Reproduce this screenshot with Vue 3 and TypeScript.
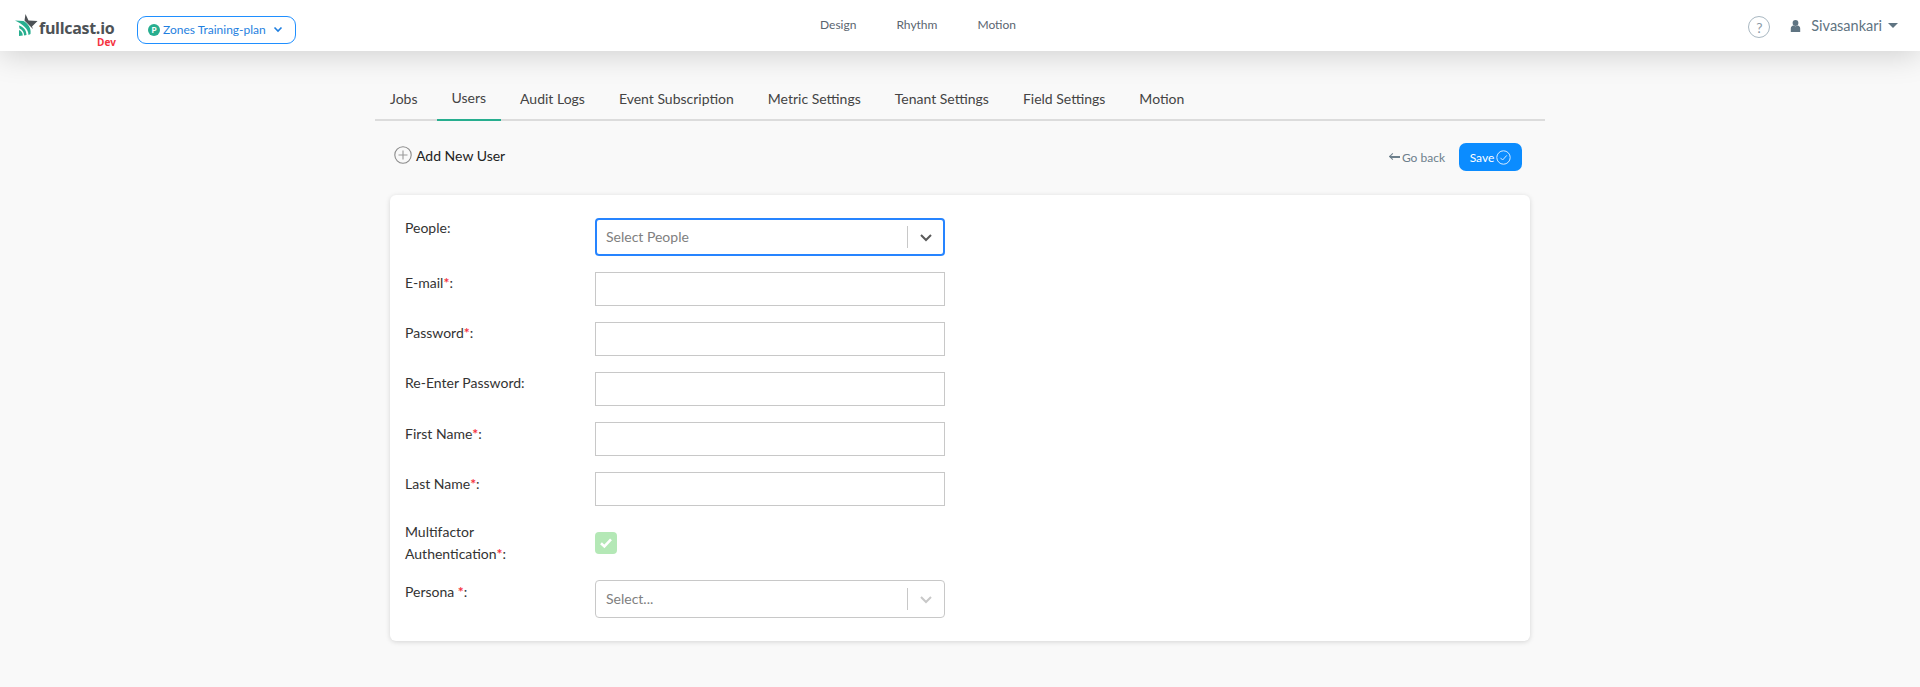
<template>
  <div class="page">
    <header class="topbar">
      <div class="topbar-left">
        <div class="logo">
          <svg class="logo-mark" width="24" height="24" viewBox="0 0 24 24">
            <path d="M10.5 1 13.5 7.5 22.5 8 17 13.5 18 16 9.5 7.5Z" fill="#4d5256" />
            <path d="M0 7.5 8.5 8C13 10.5 16.5 15 15.5 21L13.5 22C13.5 16 8 11.5 0 7.5Z" fill="#27ae8f" />
            <path d="M4 12.5C8 13.5 11.5 17 11.5 22L9.2 22.5C9 19 7 16.3 4.5 15.5Z" fill="#27ae8f" />
            <path d="M4 17C6 17.7 7.8 20 7.8 22.5L4 23Z" fill="#27ae8f" />
          </svg>
          <span class="logo-name">fullcast.io</span>
          <span class="logo-env">Dev</span>
        </div>
        <button class="plan-btn" type="button">
          <span class="plan-dot">P</span>
          <span>Zones Training-plan</span>
          <svg class="plan-chevron" width="10" height="7" viewBox="0 0 10 7">
            <path d="M1.5 1.5 5 5 8.5 1.5" fill="none" stroke="#1f7fe0" stroke-width="1.6" />
          </svg>
        </button>
      </div>
      <nav class="topnav">
        <a v-for="item in topLinks" :key="item">{{ item }}</a>
      </nav>
      <div class="topbar-right">
        <span class="help">?</span>
        <svg class="user-icon" width="11" height="12" viewBox="0 0 11 12">
          <circle cx="5.5" cy="3" r="2.9" fill="#5f7482" />
          <path d="M0.8 12V8.6C0.8 6.8 2 5.8 3.4 5.6 4.6 6.4 6.4 6.4 7.6 5.6 9 5.8 10.2 6.8 10.2 8.6V12Z" fill="#5f7482" />
        </svg>
        <span class="user-name">Sivasankari</span>
        <span class="caret"></span>
      </div>
    </header>

    <main class="content">
      <ul class="tabs">
        <li v-for="tab in tabs" :key="tab" :class="{ active: tab === 'Users' }">{{ tab }}</li>
      </ul>

      <div class="toolbar">
        <div class="add-user">
          <svg width="18" height="18" viewBox="0 0 18 18">
            <circle cx="9" cy="9" r="8.2" fill="none" stroke="#8b8b8b" stroke-width="1.1" />
            <path d="M9 4.5V13.5M4.5 9H13.5" stroke="#9a9a9a" stroke-width="1.1" />
          </svg>
          <span>Add New User</span>
        </div>
        <div class="actions">
          <span class="go-back"><span class="back-arrow"></span>Go back</span>
          <button class="save-btn" type="button">
            Save
            <svg width="15" height="15" viewBox="0 0 15 15">
              <circle cx="7.5" cy="7.5" r="6.7" fill="none" stroke="#d5ebff" stroke-width="1" />
              <path d="M4.4 7.8 6.6 10 10.8 5.4" fill="none" stroke="#d5ebff" stroke-width="1" />
            </svg>
          </button>
        </div>
      </div>

      <form class="card" @submit.prevent>
        <div class="row">
          <label class="raised">People:</label>
          <div class="select focused">
            <span class="placeholder">Select People</span>
            <span class="sep"></span>
            <svg width="14" height="9" viewBox="0 0 14 9">
              <path d="M2 2 7 7 12 2" fill="none" stroke="#5a5a5a" stroke-width="2" />
            </svg>
          </div>
        </div>
        <div v-for="field in textFields" :key="field.label" class="row">
          <label :class="{ lowered: field.lowered }">{{ field.label }}<i v-if="field.required">*</i>:</label>
          <input class="input" :type="field.type" />
        </div>
        <div class="row mfa">
          <label>Multifactor Authentication<i>*</i>:</label>
          <span class="check">
            <svg width="14" height="12" viewBox="0 0 14 12">
              <path d="M2 6.2 5.4 9.4 12 2.4" fill="none" stroke="#fff" stroke-width="2.6" />
            </svg>
          </span>
        </div>
        <div class="row">
          <label class="lowered">Persona <i>*</i>:</label>
          <div class="select">
            <span class="placeholder">Select...</span>
            <span class="sep"></span>
            <svg width="14" height="9" viewBox="0 0 14 9">
              <path d="M2 2 7 7 12 2" fill="none" stroke="#c8c8c8" stroke-width="2" />
            </svg>
          </div>
        </div>
      </form>
    </main>
  </div>
</template>

<script setup lang="ts">
interface TextField {
  label: string
  type: string
  required: boolean
  lowered?: boolean
}

const topLinks: string[] = ['Design', 'Rhythm', 'Motion']

const tabs: string[] = [
  'Jobs',
  'Users',
  'Audit Logs',
  'Event Subscription',
  'Metric Settings',
  'Tenant Settings',
  'Field Settings',
  'Motion'
]

const textFields: TextField[] = [
  { label: 'E-mail', type: 'email', required: true },
  { label: 'Password', type: 'password', required: true },
  { label: 'Re-Enter Password', type: 'password', required: false },
  { label: 'First Name', type: 'text', required: true, lowered: true },
  { label: 'Last Name', type: 'text', required: true, lowered: true }
]
</script>

<style>
html,
body {
  margin: 0;
  background: #f9f9f9;
}
</style>

<style scoped>
.page {
  min-height: 687px;
  background: #f9f9f9;
  font-family: Lato, "Liberation Sans", sans-serif;
  color: #333;
  overflow: hidden;
}

.topbar {
  display: flex;
  align-items: center;
  height: 51px;
  padding-left: 15px;
  padding-right: 22px;
  background: #fff;
  box-shadow: 0 4px 30px rgba(0, 0, 0, 0.17);
}

.topbar-left {
  display: flex;
  align-items: center;
  width: 805px;
  padding-top: 8px;
}

.logo {
  position: relative;
  display: flex;
  align-items: center;
  width: 122px;
  height: 30px;
}

.logo-mark {
  margin-top: -9px;
}

.logo-name {
  margin-top: -3px;
  font-family: "Open Sans", sans-serif;
  font-size: 16px;
  font-weight: 700;
  letter-spacing: -0.3px;
  color: #4d5256;
}

.logo-env {
  position: absolute;
  left: 82px;
  top: 21px;
  font-family: "Open Sans", sans-serif;
  font-size: 10px;
  line-height: 12px;
  font-weight: 700;
  color: #f5333f;
}

.plan-btn {
  display: flex;
  align-items: center;
  gap: 3px;
  width: 159px;
  height: 28px;
  padding: 0 10px;
  border: 1px solid #1f8fff;
  border-radius: 9px;
  background: #fff;
  font-family: inherit;
  font-size: 12px;
  color: #1f7fe0;
}

.plan-dot {
  display: inline-flex;
  align-items: center;
  justify-content: center;
  width: 12px;
  height: 12px;
  border-radius: 50%;
  background: #27ae8f;
  color: #fff;
  font-size: 8px;
  font-weight: 900;
}

.plan-chevron {
  margin-left: 4px;
}

.topnav {
  display: flex;
  gap: 40px;
  margin-top: -2px;
  font-size: 12px;
  color: #5a6570;
}

.topbar-right {
  display: flex;
  align-items: center;
  margin-left: auto;
  font-size: 14.5px;
  color: #5f7482;
}

.help {
  display: flex;
  align-items: center;
  justify-content: center;
  box-sizing: border-box;
  width: 22px;
  height: 22px;
  margin-top: 3px;
  margin-right: 20px;
  border: 1px solid #a9b8c2;
  border-radius: 50%;
  font-size: 14px;
  color: #8a9aa5;
}

.user-name {
  margin-left: 10px;
}

.caret {
  width: 0;
  height: 0;
  margin-left: 6px;
  border-left: 5px solid transparent;
  border-right: 5px solid transparent;
  border-top: 5px solid #5f7482;
}

.content {
  width: 1170px;
  margin: 0 0 0 375px;
  padding-top: 30px;
}

.tabs {
  display: flex;
  height: 38px;
  margin: 0;
  padding: 0;
  list-style: none;
  border-bottom: 2px solid #dcdcdc;
}

.tabs li {
  box-sizing: border-box;
  height: 40px;
  margin-right: 4px;
  padding: 8px 15px 0;
  font-size: 14px;
  line-height: 20px;
  color: #444;
}

.tabs li.active {
  padding-top: 7px;
  border-bottom: 2px solid #27ae8f;
}

.toolbar {
  display: flex;
  align-items: center;
  justify-content: space-between;
  height: 28px;
  margin: 22px 23px 24px 19px;
}

.add-user {
  display: flex;
  align-items: center;
  gap: 4px;
  margin-top: -4px;
  font-size: 14px;
  color: #222;
}

.actions {
  display: flex;
  align-items: center;
  gap: 14px;
}

.go-back {
  display: flex;
  align-items: center;
  gap: 2px;
  font-size: 12px;
  color: #6d7f8c;
}

.back-arrow {
  position: relative;
  width: 10px;
  height: 2px;
  background: #6d7f8c;
}

.back-arrow::before {
  content: "";
  position: absolute;
  left: 0;
  top: -2px;
  width: 4px;
  height: 4px;
  border-left: 1px solid #6d7f8c;
  border-bottom: 1px solid #6d7f8c;
  transform: rotate(45deg);
  transform-origin: center;
}

.save-btn {
  display: flex;
  align-items: center;
  justify-content: center;
  gap: 2px;
  width: 63px;
  height: 28px;
  padding: 0;
  border: 0;
  border-radius: 7px;
  background: #0b8cff;
  font-family: inherit;
  font-size: 12px;
  color: #fff;
}

.card {
  display: flex;
  flex-direction: column;
  gap: 16px;
  box-sizing: border-box;
  width: 1140px;
  height: 446px;
  margin-left: 15px;
  padding: 23px 15px;
  border-radius: 6px;
  background: #fff;
  box-shadow: 0 1px 5px rgba(0, 0, 0, 0.15);
}

.row {
  display: flex;
  align-items: flex-start;
}

.row label {
  flex: 0 0 190px;
  box-sizing: border-box;
  padding-right: 30px;
  font-size: 14px;
  line-height: 22px;
  color: #333;
}

.row label.raised {
  margin-top: -1px;
}

.row label.lowered {
  margin-top: 1px;
}

.row label i {
  font-style: normal;
  font-weight: 700;
  color: #f5333f;
}

.mfa {
  margin-top: -1px;
  margin-bottom: -1px;
}

.input {
  box-sizing: border-box;
  width: 350px;
  height: 34px;
  padding: 0 10px;
  border: 1px solid #c8c8c8;
  background: #fff;
}

.select {
  display: flex;
  align-items: center;
  box-sizing: border-box;
  width: 350px;
  height: 38px;
  padding: 0 11px 0 10px;
  border: 1px solid #c8c8c8;
  border-radius: 4px;
  background: #fff;
}

.select.focused {
  border: 2px solid #2684ff;
  padding-left: 9px;
  padding-right: 10px;
}

.placeholder {
  flex: 1;
  margin-top: -2px;
  font-size: 14px;
  color: #808080;
}

.sep {
  width: 1px;
  height: 22px;
  margin-right: 11px;
  background: #c8c8c8;
}

.check {
  display: flex;
  align-items: center;
  justify-content: center;
  width: 22px;
  height: 22px;
  margin-top: 11px;
  border-radius: 4px;
  background: #b4e8b6;
}
</style>
